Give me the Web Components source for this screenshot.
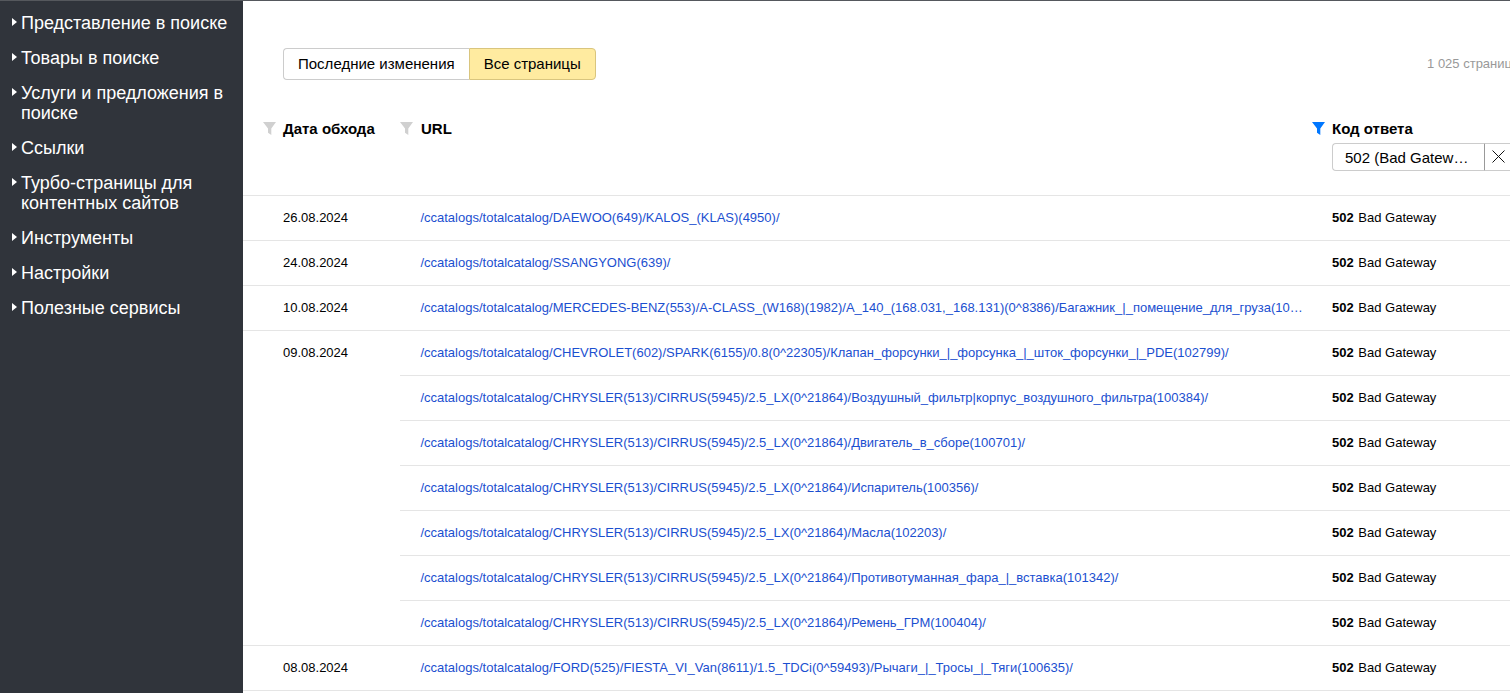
<!DOCTYPE html>
<html lang="ru">
<head>
<meta charset="utf-8">
<title>Страницы в поиске</title>
<style>
html, body { margin: 0; height: 100%; overflow: hidden; background: #fff; }
body { font: 13px/16px "Liberation Sans", Arial, sans-serif; color: #000; }
</style>
</head>
<body>
<app-shell>
  <side-nav slot="nav">
    <nav-item>Представление в поиске</nav-item>
    <nav-item>Товары в поиске</nav-item>
    <nav-item>Услуги и предложения в поиске</nav-item>
    <nav-item>Ссылки</nav-item>
    <nav-item>Турбо-страницы для контентных сайтов</nav-item>
    <nav-item>Инструменты</nav-item>
    <nav-item>Настройки</nav-item>
    <nav-item>Полезные сервисы</nav-item>
  </side-nav>

  <page-toolbar total="1 025 страниц">
    <seg-button>Последние изменения</seg-button>
    <seg-button active>Все страницы</seg-button>
  </page-toolbar>

  <crawl-head></crawl-head>

  <crawl-group date="26.08.2024">
    <crawl-row>/ccatalogs/totalcatalog/DAEWOO(649)/KALOS_(KLAS)(4950)/</crawl-row>
  </crawl-group>
  <crawl-group date="24.08.2024">
    <crawl-row>/ccatalogs/totalcatalog/SSANGYONG(639)/</crawl-row>
  </crawl-group>
  <crawl-group date="10.08.2024">
    <crawl-row>/ccatalogs/totalcatalog/MERCEDES-BENZ(553)/A-CLASS_(W168)(1982)/A_140_(168.031,_168.131)(0^8386)/Багажник_|_помещение_для_груза(100284)/</crawl-row>
  </crawl-group>
  <crawl-group date="09.08.2024">
    <crawl-row>/ccatalogs/totalcatalog/CHEVROLET(602)/SPARK(6155)/0.8(0^22305)/Клапан_форсунки_|_форсунка_|_шток_форсунки_|_PDE(102799)/</crawl-row>
    <crawl-row>/ccatalogs/totalcatalog/CHRYSLER(513)/CIRRUS(5945)/2.5_LX(0^21864)/Воздушный_фильтр|корпус_воздушного_фильтра(100384)/</crawl-row>
    <crawl-row>/ccatalogs/totalcatalog/CHRYSLER(513)/CIRRUS(5945)/2.5_LX(0^21864)/Двигатель_в_сборе(100701)/</crawl-row>
    <crawl-row>/ccatalogs/totalcatalog/CHRYSLER(513)/CIRRUS(5945)/2.5_LX(0^21864)/Испаритель(100356)/</crawl-row>
    <crawl-row>/ccatalogs/totalcatalog/CHRYSLER(513)/CIRRUS(5945)/2.5_LX(0^21864)/Масла(102203)/</crawl-row>
    <crawl-row>/ccatalogs/totalcatalog/CHRYSLER(513)/CIRRUS(5945)/2.5_LX(0^21864)/Противотуманная_фара_|_вставка(101342)/</crawl-row>
    <crawl-row>/ccatalogs/totalcatalog/CHRYSLER(513)/CIRRUS(5945)/2.5_LX(0^21864)/Ремень_ГРМ(100404)/</crawl-row>
  </crawl-group>
  <crawl-group date="08.08.2024">
    <crawl-row>/ccatalogs/totalcatalog/FORD(525)/FIESTA_VI_Van(8611)/1.5_TDCi(0^59493)/Рычаги_|_Тросы_|_Тяги(100635)/</crawl-row>
  </crawl-group>
</app-shell>

<script>
const FUNNEL = '<svg width="13" height="13" viewBox="0 0 13 13"><path d="M0 0h13L8.3 6.5V13L5 10.8V6.5z"/></svg>'

function define(name, css, html, setup) {
  customElements.define(name, class extends HTMLElement {
    constructor() {
      super()
      this.attachShadow({mode: 'open'}).innerHTML = `<style>${css}</style>${html}`
    }
    connectedCallback() {
      if (setup) setup(this, this.shadowRoot)
    }
  })
}

define('app-shell', `
  :host { display: flex; height: 693px; border-top: 1px solid #55585d; box-sizing: border-box; overflow: hidden; }
  .nav { flex: none; width: 243px; background: #30343b; }
  main { flex: none; width: 1320px; }
`, `<div class="nav"><slot name="nav"></slot></div><main><slot></slot></main>`)

define('side-nav', `
  :host { display: flex; flex-direction: column; gap: 15px; padding-top: 12px; }
`, `<slot></slot>`)

define('nav-item', `
  :host { display: block; position: relative; padding: 0 10px 0 21px; font-size: 18px; line-height: 20px; color: #fff; }
  i { position: absolute; left: 12px; top: 5px; border-left: 5px solid #fff; border-top: 4px solid transparent; border-bottom: 4px solid transparent; }
`, `<i></i><slot></slot>`)

define('page-toolbar', `
  :host { display: flex; justify-content: space-between; align-items: center; height: 32px; padding: 47px 0 0 40px; }
  .seg { display: flex; }
  .total { font-size: 13px; color: #999; margin-right: 51px; white-space: nowrap; }
  ::slotted(seg-button:first-child) { border-radius: 4px 0 0 4px; border-right: 0; }
  ::slotted(seg-button:last-child) { border-radius: 0 4px 4px 0; }
`, `<div class="seg"><slot></slot></div><div class="total"></div>`, (el, root) => {
  root.querySelector('.total').textContent = el.getAttribute('total')
})

define('seg-button', `
  :host { display: block; box-sizing: border-box; height: 32px; padding: 0 14px; border: 1px solid #ccc; font-size: 15px; line-height: 30px; color: #000; background: #fff; white-space: nowrap; }
  :host([active]) { background: #ffeba0; border-color: #d9c57e; }
`, `<slot></slot>`)

define('crawl-head', `
  :host { display: flex; box-sizing: border-box; height: 116px; padding-top: 40px; border-bottom: 1px solid #e5e5e5; font-size: 15px; font-weight: bold; line-height: 17px; }
  .col { flex: none; box-sizing: border-box; position: relative; padding-left: 40px; }
  .date { width: 157px; }
  .url { width: 912px; padding-left: 21px; }
  .code { width: 251px; padding-left: 20px; }
  svg { position: absolute; top: 2px; fill: #d0d0d0; }
  .date svg { left: 20px; }
  .url svg { left: 0; }
  .code svg { left: 0; fill: #0077ff; }
  .select { display: flex; margin-top: 6px; width: 240px; height: 28px; font-size: 15px; font-weight: normal; line-height: 27px; }
  .value { box-sizing: border-box; width: 153px; padding-left: 12px; border: 1px solid #ccc; border-right-color: #999; border-radius: 4px 0 0 4px; white-space: nowrap; }
  .clear { box-sizing: border-box; width: 40px; border: 1px solid #ccc; border-left: 0; position: relative; }
  .clear svg { left: 7px; top: 6px; fill: none; stroke: #111; }
`, `
  <div class="col date">${FUNNEL}Дата обхода</div>
  <div class="col url">${FUNNEL}URL</div>
  <div class="col code">${FUNNEL}Код ответа
    <div class="select">
      <div class="value">502 (Bad Gatew…</div>
      <div class="clear"><svg width="13" height="13" viewBox="0 0 13 13"><path d="M.5.5l12 12M12.5.5l-12 12"/></svg></div>
    </div>
  </div>
`)

define('crawl-group', `
  :host { display: flex; border-bottom: 1px solid #e5e5e5; }
  .date { box-sizing: border-box; flex: none; width: 157px; padding: 14px 0 0 40px; font-size: 13px; color: #000; }
  .rows { flex: none; width: 1163px; }
  ::slotted(crawl-row:not(:last-child)) { border-bottom: 1px solid #e5e5e5; }
`, `<div class="date"></div><div class="rows"><slot></slot></div>`, (el, root) => {
  root.querySelector('.date').textContent = el.getAttribute('date')
})

define('crawl-row', `
  :host { display: flex; height: 44px; align-items: center; font-size: 13px; }
  a { flex: none; box-sizing: border-box; width: 912px; padding: 0 8px 0 20.4px; color: #1b4fd0; text-decoration: none; white-space: nowrap; overflow: hidden; text-overflow: ellipsis; }
  .code { padding-left: 20px; white-space: nowrap; }
  b { margin-right: 1px; }
`, `<a href="#"><slot></slot></a><div class="code"><b>502</b> Bad Gateway</div>`)
</script>
</body>
</html>
